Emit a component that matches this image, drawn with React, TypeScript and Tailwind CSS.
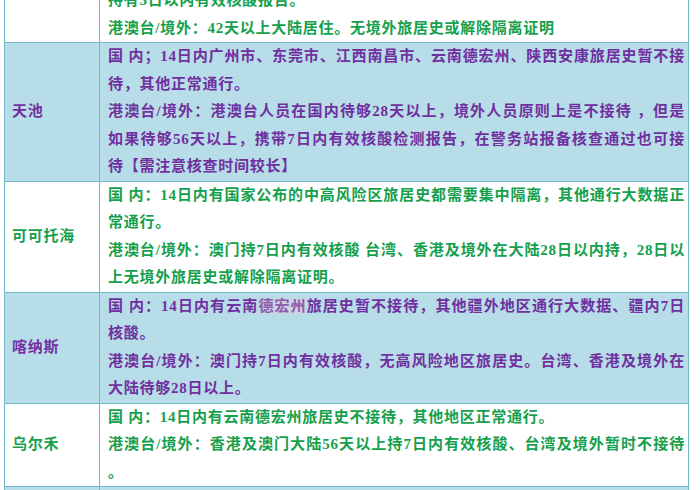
import * as React from 'react';

type Tone = 'green' | 'purple';

type Row = {
  name: string;
  tone: Tone;
  paras: React.ReactNode[][];
};

const rows: Row[] = [
  {
    name: '',
    tone: 'green',
    paras: [
      ['持有3日以内有效核酸报告。'],
      ['港澳台/境外：42天以上大陆居住。无境外旅居史或解除隔离证明'],
    ],
  },
  {
    name: '天池',
    tone: 'purple',
    paras: [
      [
        '国 内；14日内广州市、东莞市、江西南昌市、云南德宏州、陕西安康旅居史暂不接',
        '待，其他正常通行。',
      ],
      [
        '港澳台/境外：港澳台人员在国内待够28天以上，境外人员原则上是不接待 ，但是',
        '如果待够56天以上，携带7日内有效核酸检测报告，在警务站报备核查通过也可接',
        '待【需注意核查时间较长】',
      ],
    ],
  },
  {
    name: '可可托海',
    tone: 'green',
    paras: [
      [
        '国 内：14日内有国家公布的中高风险区旅居史都需要集中隔离，其他通行大数据正',
        '常通行。',
      ],
      [
        '港澳台/境外：澳门持7日内有效核酸 台湾、香港及境外在大陆28日以内持，28日以',
        '上无境外旅居史或解除隔离证明。',
      ],
    ],
  },
  {
    name: '喀纳斯',
    tone: 'purple',
    paras: [
      [
        <>
          国 内：14日内有云南
          <span className="bg-[#cdd3df] text-[#8a5cb0]">德宏州</span>
          旅居史暂不接待，其他疆外地区通行大数据、疆内7日
        </>,
        '核酸。',
      ],
      [
        '港澳台/境外：澳门持7日内有效核酸，无高风险地区旅居史。台湾、香港及境外在',
        '大陆待够28日以上。',
      ],
    ],
  },
  {
    name: '乌尔禾',
    tone: 'green',
    paras: [
      ['国 内：14日内有云南德宏州旅居史不接待，其他地区正常通行。'],
      [
        '港澳台/境外：香港及澳门大陆56天以上持7日内有效核酸、台湾及境外暂时不接待',
        '。',
      ],
    ],
  },
  {
    name: '',
    tone: 'purple',
    paras: [['\u00a0'], ['\u00a0']],
  },
];

function Lines({ lines }: { lines: React.ReactNode[] }) {
  return (
    <>
      {lines.map((line, i) => (
        <div
          key={i}
          className={
            i < lines.length - 1 ? 'text-justify [text-align-last:justify]' : ''
          }
        >
          {line}
        </div>
      ))}
    </>
  );
}

export default function App() {
  return (
    <div className="h-screen w-full overflow-hidden bg-white font-['Liberation_Serif','Noto_Sans_CJK_SC',serif] text-[15px] leading-[27.5px] font-bold tracking-[0.75px]">
      <table className="-mt-[14px] ml-1 w-[685px] table-fixed border-collapse">
        <colgroup>
          <col className="w-[95px]" />
          <col />
        </colgroup>
        <tbody>
          {rows.map((row, i) => {
            const blue = row.tone === 'purple';
            const text = blue ? 'text-[#7030a0]' : 'text-[#14a04c]';
            return (
              <tr key={i} className={blue ? 'bg-[#b7dde8]' : 'bg-white'}>
                <td
                  className={`border border-[#72b7cc] pl-[7px] align-middle ${text}`}
                >
                  {row.name}
                </td>
                <td
                  className={`border border-[#72b7cc] py-0 pr-[3px] pl-2 ${text}`}
                >
                  {row.paras.map((p, j) => (
                    <Lines key={j} lines={p} />
                  ))}
                </td>
              </tr>
            );
          })}
        </tbody>
      </table>
    </div>
  );
}
